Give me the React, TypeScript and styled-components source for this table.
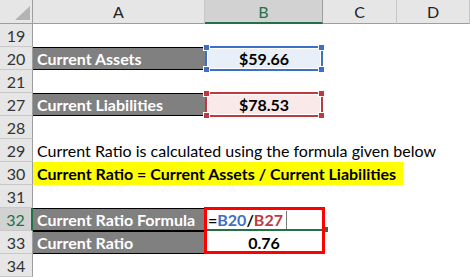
import React from "react";
import styled, { createGlobalStyle } from "styled-components";

const Global = createGlobalStyle`
  html, body { margin: 0; padding: 0; background: #ffffff; }
  body { font-family: "Lato", "Open Sans", sans-serif; }
`;

const Sheet = styled.div`
  display: grid;
  grid-template-columns: 33px 172px 118px 74px 73px;
  grid-template-rows: 24px repeat(11, 23px);
  width: 470px;
  height: 277px;
  overflow: hidden;
  background: #ffffff;
  font-family: "Lato", "Open Sans", sans-serif;
  font-size: 16px;
  color: #000;
`;

const Corner = styled.div`
  grid-row: 1;
  grid-column: 1;
  background: #e6e6e6;
  border-right: 1px solid #9e9e9e;
  border-bottom: 1px solid #9e9e9e;
  box-sizing: border-box;
  display: flex;
  align-items: flex-end;
  justify-content: flex-end;
  padding: 0 2px 3px 0;
`;

const ColHeader = styled.div<{ $col: number; $active?: boolean }>`
  grid-row: 1;
  grid-column: ${(p) => p.$col};
  box-sizing: border-box;
  background: ${(p) => (p.$active ? "#d2d2d2" : "#e6e6e6")};
  border-right: 1px solid ${(p) => (p.$active ? "#9e9e9e" : "#c6c6c6")};
  border-bottom: ${(p) => (p.$active ? "2px solid #217346" : "1px solid #9e9e9e")};
  color: ${(p) => (p.$active ? "#217346" : "#222")};
  display: flex;
  align-items: center;
  justify-content: center;
  font-size: 16px;
  padding-top: ${(p) => (p.$active ? "1px" : "0")};
`;

const RowHeader = styled.div<{ $row: number; $active?: boolean }>`
  grid-row: ${(p) => p.$row};
  grid-column: 1;
  box-sizing: border-box;
  background: ${(p) => (p.$active ? "#d2d2d2" : "#e6e6e6")};
  border-right: ${(p) => (p.$active ? "2px solid #217346" : "1px solid #9e9e9e")};
  border-bottom: 1px solid #c8c8c8;
  color: ${(p) => (p.$active ? "#217346" : "#333")};
  display: flex;
  align-items: center;
  justify-content: center;
  font-size: 16px;
`;

const LabelCell = styled.div<{ $row: number }>`
  grid-row: ${(p) => p.$row};
  grid-column: 2;
  box-sizing: border-box;
  background: #808080;
  border-top: 1px solid #000;
  border-bottom: 1px solid #000;
  color: #fff;
  font-weight: 700;
  display: flex;
  align-items: center;
  padding-left: 4px;
  white-space: nowrap;
`;

const ValueCell = styled.div<{ $row: number; $fill?: string }>`
  grid-row: ${(p) => p.$row};
  grid-column: 3;
  box-sizing: border-box;
  background: ${(p) => p.$fill ?? "transparent"};
  font-weight: 700;
  display: flex;
  align-items: center;
  justify-content: center;
  white-space: nowrap;
`;

const TextCell = styled.div<{ $row: number }>`
  grid-row: ${(p) => p.$row};
  grid-column: 2 / 6;
  display: flex;
  align-items: center;
  padding-left: 4px;
  white-space: nowrap;
`;

const HighlightRow = styled.div<{ $row: number }>`
  grid-row: ${(p) => p.$row};
  grid-column: 2 / 6;
  display: flex;
  align-items: stretch;
`;

const Yellow = styled.div`
  width: 370px;
  background: #ffff00;
  font-weight: 700;
  display: flex;
  align-items: center;
  padding-left: 4px;
  box-sizing: border-box;
  white-space: nowrap;
`;

const FormulaCell = styled.div<{ $row: number }>`
  grid-row: ${(p) => p.$row};
  grid-column: 3;
  font-weight: 700;
  display: flex;
  align-items: center;
  padding-left: 3px;
  white-space: nowrap;
`;

const Ref = styled.span<{ $color: string }>`
  color: ${(p) => p.$color};
`;

const Caret = styled.span`
  display: inline-block;
  width: 1px;
  height: 18px;
  margin-left: 3px;
  background: #7a7a7a;
`;

const RefBox = styled.div<{ $row: number; $color: string }>`
  grid-row: ${(p) => p.$row};
  grid-column: 3;
  position: relative;
  margin: -1px 0 -1px 0;
  border: 2px solid ${(p) => p.$color};
  box-shadow: inset 0 0 0 1px #ffffff;
  pointer-events: none;
`;

const Handle = styled.span<{ $color: string; $x: "left" | "right"; $y: "top" | "bottom" }>`
  position: absolute;
  width: 5px;
  height: 5px;
  background: ${(p) => p.$color};
  border: 1px solid #ffffff;
  ${(p) => p.$x}: -4px;
  ${(p) => p.$y}: -4px;
`;

const RedFrame = styled.div`
  grid-row: 10 / 12;
  grid-column: 3;
  margin: -1px -2px 0 -1px;
  border: 3px solid #ff0000;
  pointer-events: none;
  position: relative;
`;

const ActiveLine = styled.div`
  grid-row: 10;
  grid-column: 3;
  align-self: end;
  height: 2px;
  margin-right: -2px;
  background: #217346;
  position: relative;
  &::after {
    content: "";
    position: absolute;
    right: -3px;
    top: -2px;
    width: 4px;
    height: 5px;
    background: #217346;
  }
`;

const BLUE = "#3c6fc8";
const RED = "#c0393e";

export default function App() {
  const rowNums = [19, 20, 21, 27, 28, 29, 30, 31, 32, 33, 34];
  return (
    <>
      <Global />
      <Sheet>
        <Corner>
          <svg width="15" height="14" viewBox="0 0 15 14">
            <polygon points="15,0 15,14 0,14" fill="#b4b4b4" />
          </svg>
        </Corner>
        <ColHeader $col={2}>A</ColHeader>
        <ColHeader $col={3} $active>B</ColHeader>
        <ColHeader $col={4}>C</ColHeader>
        <ColHeader $col={5}>D</ColHeader>

        {rowNums.map((n, i) => (
          <RowHeader key={n} $row={i + 2} $active={n === 32}>
            {n}
          </RowHeader>
        ))}

        <LabelCell $row={3}>Current Assets</LabelCell>
        <ValueCell $row={3} $fill="#e8eff9">$59.66</ValueCell>
        <RefBox $row={3} $color={BLUE}>
          <Handle $color={BLUE} $x="left" $y="top" />
          <Handle $color={BLUE} $x="right" $y="top" />
          <Handle $color={BLUE} $x="left" $y="bottom" />
          <Handle $color={BLUE} $x="right" $y="bottom" />
        </RefBox>

        <LabelCell $row={5}>Current Liabilities</LabelCell>
        <ValueCell $row={5} $fill="#f9e9e9">$78.53</ValueCell>
        <RefBox $row={5} $color={RED}>
          <Handle $color={RED} $x="left" $y="top" />
          <Handle $color={RED} $x="right" $y="top" />
          <Handle $color={RED} $x="left" $y="bottom" />
          <Handle $color={RED} $x="right" $y="bottom" />
        </RefBox>

        <TextCell $row={7}>Current Ratio is calculated using the formula given below</TextCell>
        <HighlightRow $row={8}>
          <Yellow>Current Ratio = Current Assets / Current Liabilities</Yellow>
        </HighlightRow>

        <LabelCell $row={10}>Current Ratio Formula</LabelCell>
        <FormulaCell $row={10}>
          =<Ref $color={BLUE}>B20</Ref>/<Ref $color={RED}>B27</Ref>
          <Caret />
        </FormulaCell>
        <ActiveLine />
        <LabelCell $row={11}>Current Ratio</LabelCell>
        <ValueCell $row={11}>0.76</ValueCell>
        <RedFrame />
      </Sheet>
    </>
  );
}
